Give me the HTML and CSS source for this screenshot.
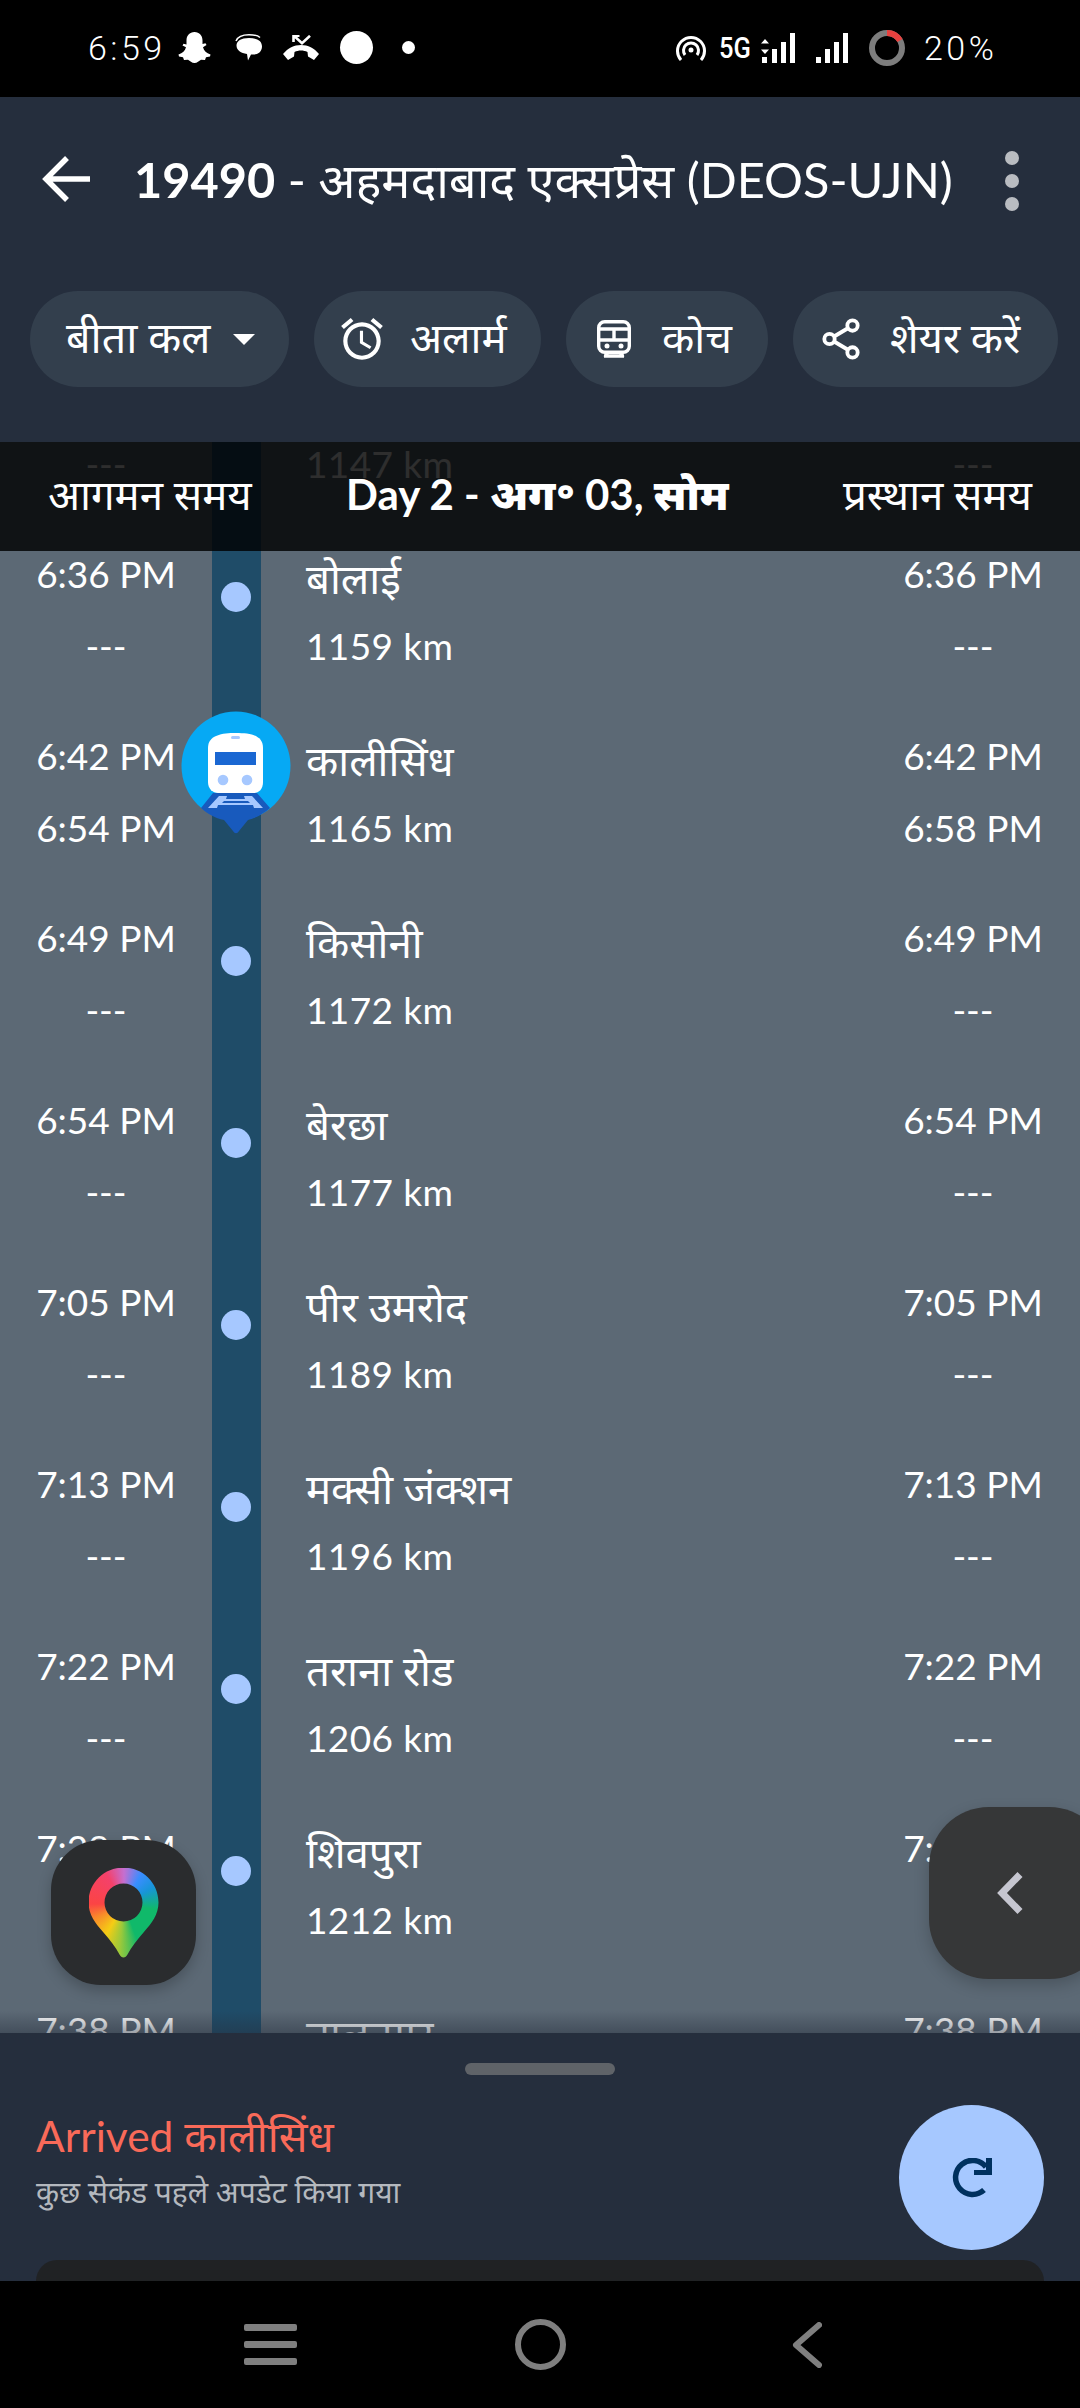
FILE: index.html
```html
<!DOCTYPE html>
<html lang="hi">
<head>
    <meta charset="UTF-8">
    <meta name="viewport" content="width=device-width, initial-scale=1.0">
    <title>19490 - अहमदाबाद एक्सप्रेस</title>
    <link rel="stylesheet" href="styles.css">
</head>
<body>
    <div class="screen">
        <div class="status-bar">
            <div class="status-left">
                <span class="clock">6:59</span>
                <svg class="st-snap" viewBox="0 0 33 31"><path fill="#fff" d="M16.500 0c5 0 8 3.600 8 8.500v3.500l3-.8 1 1.800-3.500 2.200c1 3.400 3.300 6 7.500 7.300l-.5 2-4 .8-1 2.700-4-.3c-2 1-3.800 3.300-6.500 3.300s-4.500-2.300-6.500-3.300l-4 .3-1-2.700-4-.8-.5-2c4.200-1.300 6.500-3.900 7.500-7.300L4.500 13.500l1-1.800 3 .8V8.500c0-4.900 3-8.500 8-8.500z"/></svg>
                <svg class="st-chat" viewBox="0 0 27 27"><path fill="#fff" d="M14 4c7 0 13 2 13 8.500 0 5-4 8-8 8h-3l-3 6-1-6.500C6 19 1.500 16.500 1.500 11.500 1.500 7 6 4 14 4z"/><path fill="none" stroke="#fff" stroke-width="1.500" d="M1 7C3 2 8 .8 14 .8s9 .7 11 2.700"/></svg>
                <svg class="st-missed" viewBox="0 0 36 25"><path fill="#fff" d="M18 10c7 0 13 3 18 9l-5 6-6-3.500-.5-4.500c-2-1-4.200-1.500-6.500-1.500s-4.500.5-6.500 1.500l-.5 4.500L5 25l-5-6c5-6 11-9 18-9z"/><path fill="none" stroke="#fff" stroke-width="2.600" d="M11 .8l8 7.500L27 .8M10.500 7V.8h6"/></svg>
                <span class="st-circle"></span>
                <span class="st-dot"></span>
            </div>
            <div class="status-right">
                <svg class="st-hotspot" viewBox="0 0 30 26"><g fill="none" stroke="#fff" stroke-width="3"><path d="M5 25A13.500 13.500 0 1 1 25 25"/><path d="M9 20A7.500 7.500 0 1 1 21 20"/></g><circle cx="15" cy="15" r="2.500" fill="#fff"/></svg>
                <span class="st-5g">5G</span>
                <svg class="st-signal-a" viewBox="0 0 35 30"><path fill="#fff" d="M1 24h5v6H1zM11 16h5v14h-5zM20 9h5v21h-5zM29 0h5v30h-5z"/><path fill="#fff" d="M4 6l4 4.500H0zM4 21l4-4.500H0z"/></svg>
                <svg class="st-signal-b" viewBox="0 0 32 30"><path fill="#fff" d="M0 24h5v6H0zM9 16h5v14H9zM18 9h5v21h-5zM27 0h5v30h-5z"/></svg>
                <svg class="st-ring" viewBox="0 0 36 36"><circle cx="18" cy="18" r="15" fill="none" stroke="#7d7d7d" stroke-width="6"/><path d="M18 3A15 15 0 0 1 31 10.500" fill="none" stroke="#e8413f" stroke-width="6"/></svg>
                <span class="battery">20%</span>
            </div>
        </div>

        <div class="app-bar">
            <div class="title-row">
                <svg class="back-arrow" viewBox="0 0 48 48"><path fill="none" stroke="#fff" stroke-width="5.500" d="M48 24H5M25 3L4 24l21 21"/></svg>
                <h1 class="title"><b>19490</b> - अहमदाबाद एक्सप्रेस (DEOS-UJN)</h1>
                <div class="more"><i></i><i></i><i></i></div>
            </div>
            <div class="chips">
                <div class="chip chip-day"><span>बीता कल</span><i class="caret"></i></div>
                <div class="chip chip-alarm">
                    <svg viewBox="0 0 24 24"><path fill="#fff" d="M22 5.720l-4.600-3.860-1.290 1.530 4.600 3.860L22 5.720zM7.880 3.390L6.600 1.860 2 5.710l1.290 1.530 4.590-3.850zM12.500 8H11v6l4.750 2.850.75-1.230-4-2.370V8zM12 4c-4.970 0-9 4.030-9 9s4.020 9 9 9c4.970 0 9-4.030 9-9s-4.030-9-9-9zm0 16c-3.870 0-7-3.130-7-7s3.130-7 7-7 7 3.130 7 7-3.130 7-7 7z"/></svg>
                    <span>अलार्म</span>
                </div>
                <div class="chip chip-coach">
                    <svg class="coach-icon" viewBox="0 0 34 38"><g fill="none" stroke="#fff" stroke-width="3.400"><rect x="1.700" y="1.700" width="30.600" height="30.600" rx="6"/><path d="M2 9h30M2 20h30M17 9v11M8 37l3-5M26 37l-3-5M7 36h20"/></g><circle cx="10" cy="26" r="2.500" fill="#fff"/><circle cx="24" cy="26" r="2.500" fill="#fff"/></svg>
                    <span>कोच</span>
                </div>
                <div class="chip chip-share">
                    <svg viewBox="0 0 24 24"><g fill="none" stroke="#fff" stroke-width="2"><circle cx="18" cy="5" r="2.700"/><circle cx="6" cy="12" r="2.700"/><circle cx="18" cy="19" r="2.700"/><path d="M8.400 10.700l7.200-4.300M8.400 13.300l7.200 4.300"/></g></svg>
                    <span>शेयर करें</span>
                </div>
            </div>
        </div>

        <div class="timeline">
            <div class="track"></div>
            <div class="rows">
                <div class="row"><div class="times"><span>6:30 PM</span><span>---</span></div><div class="stop"><span class="stop-name">नलखेड़ा</span><span>1147 km</span></div><div class="times"><span>6:30 PM</span><span>---</span></div></div>
                <div class="row"><div class="times"><span>6:36 PM</span><span>---</span></div><div class="stop"><span class="stop-name">बोलाई</span><span>1159 km</span></div><div class="times"><span>6:36 PM</span><span>---</span></div></div>
                <div class="row"><div class="times"><span>6:42 PM</span><span>6:54 PM</span></div><div class="stop"><span class="stop-name">कालीसिंध</span><span>1165 km</span></div><div class="times"><span>6:42 PM</span><span>6:58 PM</span></div></div>
                <div class="row"><div class="times"><span>6:49 PM</span><span>---</span></div><div class="stop"><span class="stop-name">किसोनी</span><span>1172 km</span></div><div class="times"><span>6:49 PM</span><span>---</span></div></div>
                <div class="row"><div class="times"><span>6:54 PM</span><span>---</span></div><div class="stop"><span class="stop-name">बेरछा</span><span>1177 km</span></div><div class="times"><span>6:54 PM</span><span>---</span></div></div>
                <div class="row"><div class="times"><span>7:05 PM</span><span>---</span></div><div class="stop"><span class="stop-name">पीर उमरोद</span><span>1189 km</span></div><div class="times"><span>7:05 PM</span><span>---</span></div></div>
                <div class="row"><div class="times"><span>7:13 PM</span><span>---</span></div><div class="stop"><span class="stop-name">मक्सी जंक्शन</span><span>1196 km</span></div><div class="times"><span>7:13 PM</span><span>---</span></div></div>
                <div class="row"><div class="times"><span>7:22 PM</span><span>---</span></div><div class="stop"><span class="stop-name">तराना रोड</span><span>1206 km</span></div><div class="times"><span>7:22 PM</span><span>---</span></div></div>
                <div class="row"><div class="times"><span>7:28 PM</span><span>---</span></div><div class="stop"><span class="stop-name">शिवपुरा</span><span>1212 km</span></div><div class="times"><span>7:28 PM</span><span>---</span></div></div>
                <div class="row"><div class="times"><span>7:38 PM</span><span>---</span></div><div class="stop"><span class="stop-name">तालनगर</span><span>1220 km</span></div><div class="times"><span>7:38 PM</span><span>---</span></div></div>
            </div>

            <div class="table-head">
                <span>आगमन समय</span>
                <span class="day">Day 2 - <b>अग॰</b> 03, <b>सोम</b></span>
                <span>प्रस्थान समय</span>
            </div>

            <svg class="train-pin" viewBox="0 0 110 124">
                <circle cx="55" cy="55" r="54.500" fill="#06a9f4"/>
                <path fill="#185abd" d="M20 97l12-15h44l13 15c-7 6-14 10-22 12L58 120c-2 3-4 3-6 0L43 109c-9-2-16-6-23-12z"/>
                <path fill="#a6c8ff" d="M27 97l11-12h8l-1 3h19l-1-3h8l11 12h-9l-1-3H37l-1 3zM43 90l-2 2h28l-2-2z"/>
                <path fill="#fff" d="M55 22c14 0 27 2 27 15v34c0 7-4 11-9 11H37c-5 0-10-4-10-11V37c0-13 14-15 28-15z"/>
                <rect x="34" y="41" width="41" height="13" fill="#1a67d2"/>
                <rect x="50" y="25" width="9" height="3" rx="1.500" fill="#a6c8ff"/>
                <circle cx="42" cy="69" r="5.300" fill="#a6c8ff"/>
                <circle cx="66" cy="69" r="5.300" fill="#a6c8ff"/>
            </svg>

            <div class="map-btn"><div class="map-pin"></div></div>
            <div class="side-btn">
                <svg viewBox="0 0 26 42"><path fill="none" stroke="#c6c6d0" stroke-width="7" d="M23 2.500L5 21l18 18.500"/></svg>
            </div>
        </div>

        <div class="sheet">
            <div class="handle"></div>
            <div class="sheet-main">
                <div class="sheet-text">
                    <div class="arrived">Arrived कालीसिंध</div>
                    <div class="updated">कुछ सेकंड पहले अपडेट किया गया</div>
                </div>
                <div class="refresh">
                    <svg viewBox="0 0 40 40"><path fill="none" stroke="#00315f" stroke-width="5.500" d="M34 9A17 17 0 1 0 32 32"/><path fill="#00315f" d="M22 12h12V0h6v17H22z"/></svg>
                </div>
            </div>
            <div class="sheet-card"></div>
        </div>

        <div class="nav-bar">
            <div class="nav-menu"><i></i><i></i><i></i></div>
            <div class="nav-home"></div>
            <svg class="nav-back" viewBox="0 0 30 46"><path fill="none" stroke="#7f7f7f" stroke-width="6" stroke-linecap="round" stroke-linejoin="round" d="M27 3L4 23l23 20"/></svg>
        </div>
    </div>
</body>
</html>
```
FILE: styles.css
```css
* {
    box-sizing: border-box;
}

body {
    margin: 0;
    background-color: #000;
    font-family: Lato, "Noto Sans", "Noto Sans Devanagari", sans-serif;
    color: #fff;
}

.screen {
    display: flex;
    flex-direction: column;
    width: 1080px;
    height: 2408px;
    overflow: hidden;
}

/* status bar */
.status-bar {
    flex: 0 0 97px;
    display: flex;
    justify-content: space-between;
    align-items: center;
    background-color: #000;
    padding: 0 84px 2px 88px;
}

.status-left,
.status-right {
    display: flex;
    align-items: center;
}

.clock {
    width: 90px;
    font-family: Roboto, sans-serif;
    font-weight: 300;
    font-size: 34px;
    letter-spacing: 3.500px;
}

.st-snap {
    width: 33px;
    height: 31px;
}

.st-chat {
    width: 27px;
    height: 27px;
    margin-left: 24px;
}

.st-missed {
    width: 36px;
    height: 25px;
    margin-left: 21px;
}

.st-circle {
    width: 33px;
    height: 33px;
    margin-left: 21px;
    border-radius: 50%;
    background-color: #fff;
}

.st-dot {
    width: 13px;
    height: 13px;
    margin-left: 29px;
    border-radius: 50%;
    background-color: #fff;
}

.st-hotspot {
    width: 30px;
    height: 26px;
}

.st-5g {
    width: 30px;
    margin-left: 13px;
    font-family: Roboto, sans-serif;
    font-weight: 500;
    font-size: 30px;
    transform: scaleX(.85);
    transform-origin: left;
}

.st-signal-a {
    width: 35px;
    height: 30px;
    margin-left: 12px;
}

.st-signal-b {
    width: 32px;
    height: 30px;
    margin-left: 20px;
}

.st-ring {
    width: 36px;
    height: 36px;
    margin-left: 21px;
}

.battery {
    width: 72px;
    margin-left: 19px;
    font-family: Roboto, sans-serif;
    font-weight: 300;
    font-size: 34px;
    letter-spacing: 3.500px;
    white-space: nowrap;
}

/* top bar */
.app-bar {
    flex: 0 0 345px;
    background-color: #252e3d;
}

.title-row {
    display: flex;
    align-items: center;
    height: 164px;
    padding: 0 0 0 42px;
}

.back-arrow {
    width: 48px;
    height: 48px;
}

.title {
    flex: 1;
    margin: 0 0 0 44px;
    font-size: 48.700px;
    font-weight: 400;
    white-space: nowrap;
}

.more {
    display: flex;
    flex-direction: column;
    gap: 9px;
    width: 75px;
    margin-top: 3px;
}

.more i {
    width: 14px;
    height: 14px;
    border-radius: 50%;
    background-color: #b9bcc1;
}

.chips {
    display: flex;
    gap: 25px;
    margin-top: 30px;
    padding-left: 30px;
}

.chip {
    display: flex;
    align-items: center;
    height: 96px;
    border-radius: 48px;
    background-color: #333f4d;
    font-size: 42px;
    white-space: nowrap;
}

.chip span {
    margin-top: -6px;
}

.chip svg {
    width: 46px;
    height: 46px;
}

.chip svg.coach-icon {
    width: 34px;
    height: 38px;
    margin-left: 6px;
    margin-right: 6px;
}

.chip-day {
    width: 259px;
    padding-left: 36px;
    font-size: 43px;
}

.chip-alarm {
    width: 227px;
    padding-left: 23px;
    gap: 23px;
}

.chip-alarm svg {
    width: 50px;
    height: 50px;
}

.chip-coach {
    width: 202px;
    padding-left: 25px;
    gap: 25px;
}

.chip-share {
    width: 265px;
    padding-left: 25px;
    gap: 26px;
}

.caret {
    width: 0;
    height: 0;
    margin-left: 22px;
    border-left: 11px solid transparent;
    border-right: 11px solid transparent;
    border-top: 11px solid #fff;
}

/* timeline */
.timeline {
    position: relative;
    flex: 1;
    overflow: hidden;
    background-color: #5c6975;
}

.timeline::after {
    content: '';
    position: absolute;
    left: 0;
    right: 0;
    bottom: 0;
    height: 22px;
    background: linear-gradient(rgba(37, 46, 61, 0), rgba(37, 46, 61, .45));
}

.track {
    position: absolute;
    top: 0;
    bottom: 0;
    left: 212px;
    width: 49px;
    background-color: #1f4c68;
}

.rows {
    position: relative;
    margin-top: -90px;
}

.row {
    display: flex;
    height: 182px;
    font-size: 37px;
    line-height: 72px;
    padding-top: 4px;
}

.times {
    display: flex;
    flex-direction: column;
    align-items: center;
    width: 212px;
}

.times:last-child {
    width: 214px;
}

.stop {
    position: relative;
    flex: 1;
    display: flex;
    flex-direction: column;
    margin-left: 94px;
    letter-spacing: .4px;
}

/* station dot on the track */
.stop::before {
    content: '';
    position: absolute;
    left: -85px;
    top: 44px;
    width: 30px;
    height: 30px;
    border-radius: 50%;
    background-color: #a6c8ff;
}

.stop-name {
    font-size: 42px;
    letter-spacing: 0;
    transform: translateY(4px);
}

.table-head {
    position: absolute;
    top: 0;
    left: 0;
    right: 0;
    display: flex;
    justify-content: space-between;
    align-items: center;
    height: 109px;
    padding: 0 48px 6px;
    background-color: rgba(0, 0, 0, .82);
    font-size: 42px;
}

.day {
    margin-right: 20px;
    font-size: 42px;
    font-weight: 700;
}

.train-pin {
    position: absolute;
    left: 181px;
    top: 269px;
    width: 110px;
    height: 124px;
}

.map-btn {
    position: absolute;
    left: 51px;
    top: 1398px;
    display: flex;
    justify-content: center;
    align-items: center;
    width: 145px;
    height: 145px;
    border-radius: 50px;
    background-color: #2a2c2e;
    box-shadow: 0 6px 14px rgba(0, 0, 0, .22);
}

.map-pin {
    width: 70px;
    height: 90px;
    background: conic-gradient(from 330deg at 50% 40%, #f4416b, #c56fd0 30deg, #3a8dff 60deg, #1795d8 90deg, #10b96a 130deg, #10b96a 190deg, #9ac93b 215deg, #f5cd14 240deg, #f9882b 275deg, #fb4444 300deg, #f4416b 360deg);
    clip-path: path(evenodd, "M35 0C54 0 70 15 70 35C70 47 63 56 55 65C49 72 43 79 39 87C37 91 33 91 31 87C27 79 21 72 15 65C7 56 0 47 0 35C0 15 16 0 35 0ZM35 16A19 19 0 1 0 35 54A19 19 0 1 0 35 16Z");
}

.side-btn {
    position: absolute;
    left: 929px;
    top: 1365px;
    display: flex;
    align-items: center;
    width: 180px;
    height: 172px;
    padding-left: 68px;
    border-radius: 60px;
    background-color: #363738;
    box-shadow: 0 6px 16px rgba(0, 0, 0, .2);
}

.side-btn svg {
    width: 26px;
    height: 42px;
}

/* bottom sheet */
.sheet {
    flex: 0 0 248px;
    display: flex;
    flex-direction: column;
    background-color: #252e3d;
}

.handle {
    flex: none;
    align-self: center;
    width: 150px;
    height: 12px;
    margin-top: 30px;
    border-radius: 6px;
    background-color: #5f6368;
}

.sheet-main {
    flex: none;
    display: flex;
    justify-content: space-between;
    align-items: center;
    height: 145px;
    margin-top: 30px;
    padding: 0 36px;
}

.sheet-text {
    padding-bottom: 36px;
}

.arrived {
    font-size: 42.500px;
    color: #f96a59;
}

.updated {
    margin-top: 7px;
    font-size: 30px;
    color: #b4b8be;
}

.refresh {
    display: flex;
    justify-content: center;
    align-items: center;
    width: 145px;
    height: 145px;
    border-radius: 50%;
    background-color: #a6c8ff;
}

.refresh svg {
    width: 40px;
    height: 40px;
}

.sheet-card {
    flex: none;
    height: 21px;
    margin: 10px 36px 0;
    border-radius: 24px 24px 0 0;
    background-color: #202224;
}

/* system nav */
.nav-bar {
    flex: 0 0 127px;
    display: flex;
    align-items: center;
    background-color: #000;
}

.nav-menu {
    display: flex;
    flex-direction: column;
    gap: 10px;
    width: 53px;
    margin-left: 244px;
}

.nav-menu i {
    height: 7px;
    border-radius: 2px;
    background-color: #7f7f7f;
}

.nav-home {
    width: 51px;
    height: 51px;
    margin-left: 218px;
    border: 6px solid #7f7f7f;
    border-radius: 50%;
}

.nav-back {
    width: 30px;
    height: 46px;
    margin-left: 226px;
}
```
